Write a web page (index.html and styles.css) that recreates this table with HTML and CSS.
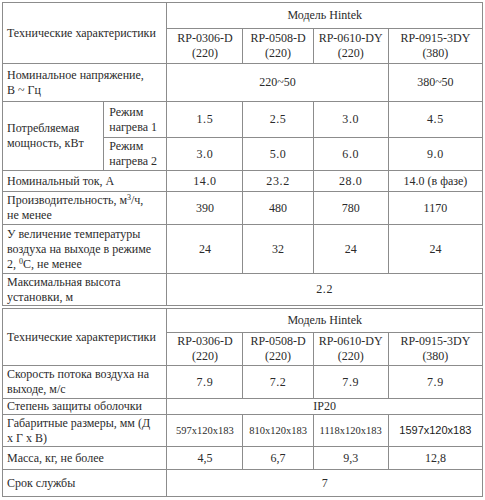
FILE: index.html
```html
<!DOCTYPE html>
<html lang="ru">
<head>
<meta charset="utf-8">
<link rel="stylesheet" href="styles.css">
</head>
<body>
<div class="page">
<table class="spec">
  <colgroup>
    <col class="c1"><col class="c1b"><col class="c2"><col class="c3"><col class="c4"><col class="c5">
  </colgroup>
  <tr class="h-a">
    <td class="lbl" colspan="2" rowspan="2">Технические характеристики</td>
    <td colspan="4">Модель Hintek</td>
  </tr>
  <tr class="h-b">
    <td>RP-0306-D<br>(220)</td>
    <td>RP-0508-D<br>(220)</td>
    <td>RP-0610-DY<br>(220)</td>
    <td>RP-0915-3DY<br>(380)</td>
  </tr>
  <tr class="r-nom">
    <td class="lbl" colspan="2">Номинальное напряжение,<br>В ~ Гц</td>
    <td colspan="3">220~50</td>
    <td>380~50</td>
  </tr>
  <tr class="r-m1">
    <td class="lbl" rowspan="2">Потребляемая<br>мощность, кВт</td>
    <td class="lbl sub">Режим<br>нагрева 1</td>
    <td class="num">1.5</td>
    <td class="num">2.5</td>
    <td class="num">3.0</td>
    <td class="num">4.5</td>
  </tr>
  <tr class="r-m2">
    <td class="lbl sub">Режим<br>нагрева 2</td>
    <td class="num">3.0</td>
    <td class="num">5.0</td>
    <td class="num">6.0</td>
    <td class="num">9.0</td>
  </tr>
  <tr class="r-tok">
    <td class="lbl" colspan="2">Номинальный ток, А</td>
    <td class="num">14.0</td>
    <td class="num">23.2</td>
    <td class="num">28.0</td>
    <td>14.0 (в фазе)</td>
  </tr>
  <tr class="r-pr">
    <td class="lbl" colspan="2">Производительность, м<sup>3</sup>/ч,<br>не менее</td>
    <td>390</td>
    <td>480</td>
    <td>780</td>
    <td>1170</td>
  </tr>
  <tr class="r-uv">
    <td class="lbl" colspan="2">У величение температуры<br>воздуха на выходе в режиме<br>2, <sup>0</sup>С, не менее</td>
    <td>24</td>
    <td>32</td>
    <td>24</td>
    <td>24</td>
  </tr>
  <tr class="r-mx">
    <td class="lbl" colspan="2">Максимальная высота<br>установки, м</td>
    <td colspan="4" class="num">2.2</td>
  </tr>
</table>

<table class="spec second">
  <colgroup>
    <col class="c1"><col class="c1b"><col class="c2"><col class="c3"><col class="c4"><col class="c5">
  </colgroup>
  <tr class="h2-a">
    <td class="lbl" colspan="2" rowspan="2">Технические характеристики</td>
    <td colspan="4">Модель Hintek</td>
  </tr>
  <tr class="h2-b">
    <td>RP-0306-D<br>(220)</td>
    <td>RP-0508-D<br>(220)</td>
    <td>RP-0610-DY<br>(220)</td>
    <td>RP-0915-3DY<br>(380)</td>
  </tr>
  <tr class="r-sk">
    <td class="lbl" colspan="2">Скорость потока воздуха на<br>выходе, м/с</td>
    <td class="num">7.9</td>
    <td class="num">7.2</td>
    <td class="num">7.9</td>
    <td class="num">7.9</td>
  </tr>
  <tr class="r-st">
    <td class="lbl" colspan="2">Степень защиты оболочки</td>
    <td colspan="4">IP20</td>
  </tr>
  <tr class="r-gb">
    <td class="lbl" colspan="2">Габаритные размеры, мм (Д<br>х Г х В)</td>
    <td class="small">597x120x183</td>
    <td class="small">810x120x183</td>
    <td class="small">1118x120x183</td>
    <td class="sans">1597x120x183</td>
  </tr>
  <tr class="r-ms">
    <td class="lbl" colspan="2">Масса, кг, не более</td>
    <td>4,5</td>
    <td>6,7</td>
    <td>9,3</td>
    <td>12,8</td>
  </tr>
  <tr class="r-sr">
    <td class="lbl" colspan="2">Срок службы</td>
    <td colspan="4">7</td>
  </tr>
</table>
</div>
</body>
</html>
```

FILE: styles.css
```css
html, body {
  margin: 0;
  padding: 0;
  background: #ffffff;
}

.page {
  padding: 2px 0 0 2px;
  display: flex;
  flex-direction: column;
  gap: 2px;
}

.spec {
  border-collapse: collapse;
  table-layout: fixed;
  width: 481px;
  font-family: "Liberation Serif", "DejaVu Serif", serif;
  font-size: 12px;
  line-height: 15px;
  color: #2b2b2b;
}

.c1 { width: 101px; }
.c1b { width: 63px; }
.c2 { width: 76px; }
.c3 { width: 70px; }
.c4 { width: 75px; }
.c5 { width: 94px; }

.spec td {
  border: 1px solid #8c8c8c;
  padding: 0;
  text-align: center;
  vertical-align: middle;
  overflow: hidden;
  white-space: nowrap;
}

.spec td.lbl {
  text-align: left;
  padding-left: 4px;
}

.spec td.sub {
  padding-left: 5px;
}

.num {
  letter-spacing: 0.6px;
}

sup {
  font-size: 8px;
  line-height: 0;
  vertical-align: 4px;
}

.small {
  font-size: 10.5px;
}

.sans {
  font-family: "Liberation Sans", Arial, sans-serif;
  font-size: 11px;
  color: #1a1a1a;
}

.h-a td { height: 25px; }
.h-b td { height: 34px; }
.r-nom td { height: 37px; }
.r-m1 td { height: 35px; }
.r-m2 td { height: 32px; }
.r-tok td { height: 20px; }
.r-pr td { height: 32px; }
.r-uv td { height: 48px; }
.r-mx td { height: 31px; }

.h2-a td { height: 23px; }
.h2-b td { height: 32px; }
.r-sk td { height: 32px; }
.r-st td { height: 15px; }
.r-gb td { height: 31px; }
.r-ms td { height: 22px; }
.r-sr td { height: 26px; }
```
